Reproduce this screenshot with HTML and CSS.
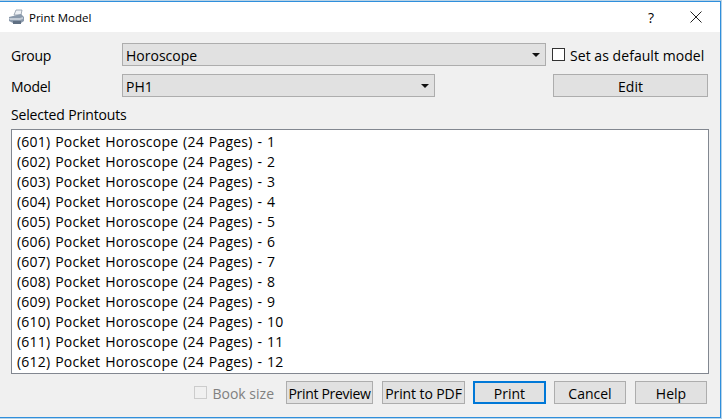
FILE: index.html
```html
<!DOCTYPE html>
<html lang="en">
<head>
<meta charset="utf-8">
<title>Print Model</title>
<link rel="stylesheet" href="styles.css">
</head>
<body>
<div class="window">
  <header class="titlebar">
    <svg class="app-icon" width="17" height="16" viewBox="0 0 17 16">
      <path d="M6 6 L8 1 L14 1 L13 6 Z" fill="#eef1f5" stroke="#8b97a5" stroke-width="0.8"/>
      <path d="M1 8 L13 5 L16 8 L16 12 L13 14 L5 14 L1 12 Z" fill="#8a99ab"/>
      <path d="M1 9 L12 9 L15 8 L15 10 L12 11 L2 11 Z" fill="#c4ccd6"/>
      <path d="M5 12 H13 V15 H5 Z" fill="#5f6f82"/>
    </svg>
    <span class="title">Print Model</span>
    <span class="help-btn">?</span>
    <svg class="close" width="12" height="12" viewBox="0 0 12 12"><path d="M.5 .5 L11.5 11.5 M11.5 .5 L.5 11.5" stroke="#222" stroke-width="1" fill="none"/></svg>
  </header>
  <main class="content">
    <div class="row row-group">
      <label class="lbl">Group</label>
      <div class="combo combo-group"><span>Horoscope</span><i class="arrow"></i></div>
      <label class="check"><i class="box"></i><span class="wide">Set as default model</span></label>
    </div>
    <div class="row row-model">
      <label class="lbl">Model</label>
      <div class="combo combo-model"><span>PH1</span><i class="arrow"></i></div>
      <button class="btn btn-edit">Edit</button>
    </div>
    <div class="section">Selected Printouts</div>
    <ul class="list">
      <li>(601) Pocket Horoscope (24 Pages) - 1</li>
      <li>(602) Pocket Horoscope (24 Pages) - 2</li>
      <li>(603) Pocket Horoscope (24 Pages) - 3</li>
      <li>(604) Pocket Horoscope (24 Pages) - 4</li>
      <li>(605) Pocket Horoscope (24 Pages) - 5</li>
      <li>(606) Pocket Horoscope (24 Pages) - 6</li>
      <li>(607) Pocket Horoscope (24 Pages) - 7</li>
      <li>(608) Pocket Horoscope (24 Pages) - 8</li>
      <li>(609) Pocket Horoscope (24 Pages) - 9</li>
      <li>(610) Pocket Horoscope (24 Pages) - 10</li>
      <li>(611) Pocket Horoscope (24 Pages) - 11</li>
      <li>(612) Pocket Horoscope (24 Pages) - 12</li>
    </ul>
    <div class="actions">
      <label class="check check-off"><i class="box"></i><span>Book size</span></label>
      <button class="btn b-preview">Print Preview</button>
      <button class="btn b-pdf">Print to PDF</button>
      <button class="btn b-print">Print</button>
      <button class="btn b-cancel">Cancel</button>
      <button class="btn b-help">Help</button>
    </div>
  </main>
</div>
</body>
</html>
```

FILE: styles.css
```css
* { box-sizing: border-box; }
html, body { margin: 0; padding: 0; }
body {
  width: 722px;
  height: 419px;
  overflow: hidden;
  background: #b9d3e6;
  font-family: "Open Sans", "Noto Sans", sans-serif;
  font-size: 14px;
  color: #000;
}
.window {
  width: 721px;
  height: 417px;
  margin-top: 1px;
  border: solid #2f8fdc;
  border-width: 1px 1px 1px 0;
  background: #f0f0f0;
  display: flex;
  flex-direction: column;
}
.titlebar {
  height: 30px;
  flex: none;
  background: #fff;
  display: flex;
  align-items: center;
  padding-left: 8px;
  font-size: 11.5px;
}
.app-icon { margin-right: 4px; }
.title { flex: 1; }
.help-btn { font-size: 14px; margin-right: 36px; }
.close { margin-right: 18px; }
.content { flex: 1; padding: 11px 10px 0 11px; display: flex; flex-direction: column; }
.row { display: flex; align-items: center; height: 23px; }
.row-model { margin-top: 8px; }
.lbl { width: 111px; flex: none; padding-top: 2px; letter-spacing: -0.3px; }
.combo {
  height: 23px;
  border: 1px solid #adadad;
  background: #e1e1e1;
  display: flex;
  align-items: center;
  justify-content: space-between;
  padding: 2px 5px 0 3px;
}
.combo-group { width: 424px; }
.combo-model { width: 313px; }
.arrow { width: 0; height: 0; margin-top: -2px; border: 4px solid transparent; border-top: 4px solid #111; border-bottom: 0; }
.check { display: flex; align-items: center; }
.check span { padding-top: 2px; }
.wide { letter-spacing: 0.05px; }
.box { width: 13px; height: 13px; border: 1px solid #333; background: #fff; margin-right: 5px; flex: none; }
.row-group .check { margin-left: 6px; white-space: nowrap; }
.check-off { color: #808080; margin-right: 12px; }
.check-off .box { border-color: #ccc; background: #f0f0f0; }
.btn {
  height: 23px;
  border: 1px solid #adadad;
  background: #e1e1e1;
  font: inherit;
  color: inherit;
  padding: 2px 0 0;
  white-space: nowrap;
}
.btn-edit { width: 155px; margin-left: 118px; }
.section { margin-top: 8px; height: 24px; line-height: 19px; letter-spacing: -0.17px; }
.list {
  list-style: none;
  margin: 0;
  padding: 2px 0 0 5px;
  height: 245px;
  width: 698px;
  background: #fff;
  border: 1px solid #828790;
  flex: none;
}
.list li { height: 20px; line-height: 20px; white-space: nowrap; letter-spacing: 0.22px; word-spacing: 1px; }
.actions { display: flex; align-items: center; justify-content: flex-end; width: 698px; height: 23px; margin-top: 7px; padding-right: 2px; }
.b-preview { width: 87px; margin-right: 9px; letter-spacing: -0.3px; }
.b-pdf { width: 83px; margin-right: 8px; letter-spacing: -0.1px; }
.b-print { width: 73px; margin-right: 8px; border: 2px solid #0078d7; padding-top: 1px; }
.b-cancel { width: 72px; margin-right: 9px; }
.b-help { width: 72px; }
```
